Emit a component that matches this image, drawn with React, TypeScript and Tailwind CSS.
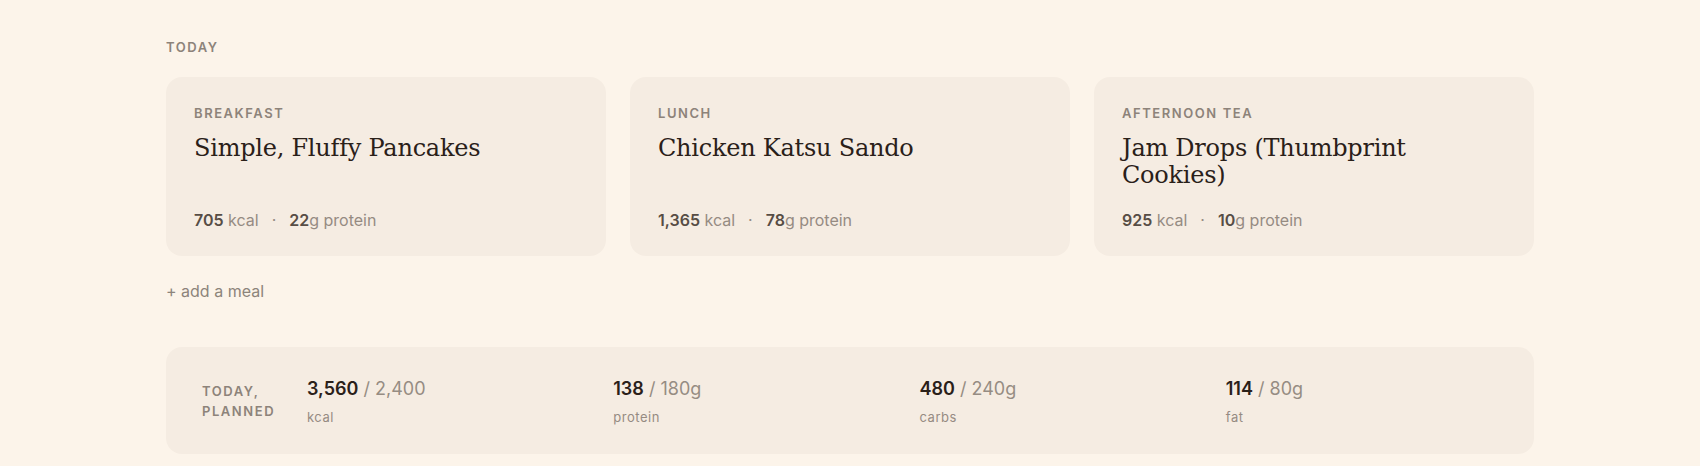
import React from 'react';

interface Meal {
  slot: string;
  title: string;
  kcal: string;
  protein: string;
}

const meals: Meal[] = [
  { slot: 'Breakfast', title: 'Simple, Fluffy Pancakes', kcal: '705', protein: '22' },
  { slot: 'Lunch', title: 'Chicken Katsu Sando', kcal: '1,365', protein: '78' },
  { slot: 'Afternoon tea', title: 'Jam Drops (Thumbprint Cookies)', kcal: '925', protein: '10' },
];

const totals = [
  { value: '3,560', target: '2,400', label: 'kcal' },
  { value: '138', target: '180g', label: 'protein' },
  { value: '480', target: '240g', label: 'carbs' },
  { value: '114', target: '80g', label: 'fat' },
];

const sans = { fontFamily: 'Inter, "Noto Sans", sans-serif' };
const serif = { fontFamily: '"DejaVu Serif", "Liberation Serif", serif' };

function MealCard({ meal }: { meal: Meal }) {
  return (
    <div className="flex flex-col rounded-2xl bg-[#f5ece2] px-7 pt-7 pb-[26px]">
      <div className="text-[13px] leading-4 font-semibold uppercase tracking-[0.12em] text-[#8d837a]">{meal.slot}</div>
      <h3 className="mt-[14px] text-[24px] leading-[27px] tracking-[-0.01em] text-[#2a2019]" style={serif}>
        {meal.title}
      </h3>
      <div className="mt-auto flex items-center gap-[13px] pt-[21px] text-[16px] leading-5 text-[#958b82]">
        <span>
          <span className="font-semibold text-[#574d45]">{meal.kcal}</span> kcal
        </span>
        <span>·</span>
        <span>
          <span className="font-semibold text-[#574d45]">{meal.protein}</span>g protein
        </span>
      </div>
    </div>
  );
}

export default function App() {
  return (
    <div className="min-h-screen bg-[#fcf4ea]" style={sans}>
      <div className="mx-auto max-w-[1368px] pt-[39px]">
        <div className="mb-[22px] text-[13px] leading-4 font-semibold uppercase tracking-[0.12em] text-[#8d837a]">Today</div>

        <div className="grid grid-cols-3 gap-6">
          {meals.map((m) => (
            <MealCard key={m.slot} meal={m} />
          ))}
        </div>

        <button className="mt-[23px] block text-[16px] leading-6 text-[#8d847b]">+ add a meal</button>

        <div className="mt-[44px] flex h-[107px] items-center gap-6 rounded-2xl bg-[#f5ece2] px-9">
          <div className="w-[81px] shrink-0 text-[13px] leading-[20px] font-semibold uppercase tracking-[0.12em] text-[#8d837a]">
            Today, planned
          </div>
          <div className="grid flex-1 grid-cols-4 gap-x-[34px]">
            {totals.map((t) => (
              <div key={t.label}>
                <div className="text-[18px] leading-[28px] text-[#968c83]">
                  <span className="font-semibold text-[#2a2019]">{t.value}</span> / {t.target}
                </div>
                <div className="mt-1 text-[13px] leading-5 tracking-[0.04em] text-[#958b82]">{t.label}</div>
              </div>
            ))}
          </div>
        </div>
      </div>
    </div>
  );
}
